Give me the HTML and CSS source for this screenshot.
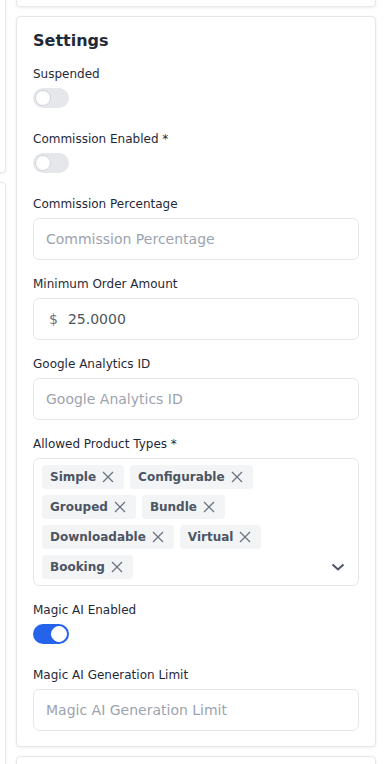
FILE: index.html
```html
<!DOCTYPE html>
<html lang="en">

<head>
  <meta charset="UTF-8">
  <meta name="viewport" content="width=device-width, initial-scale=1.0">
  <title>Vendor Settings</title>
  <link rel="stylesheet" href="styles.css">
</head>

<body>
  <div class="page">
    <div class="side-column">
      <div class="card side-card-top"></div>
      <div class="card side-card-bottom"></div>
    </div>

    <div class="main-column">
      <div class="card top-card"></div>

      <div class="card settings-card">
        <p class="card-title">Settings</p>

        <div class="field toggle-field">
          <label class="field-label">Suspended</label>
          <span class="toggle"><span class="toggle-knob"></span></span>
        </div>

        <div class="field toggle-field">
          <label class="field-label">Commission Enabled *</label>
          <span class="toggle"><span class="toggle-knob"></span></span>
        </div>

        <div class="field">
          <label class="field-label">Commission Percentage</label>
          <input type="text" class="text-input" placeholder="Commission Percentage">
        </div>

        <div class="field">
          <label class="field-label">Minimum Order Amount</label>
          <div class="price-input">
            <span class="price-prefix">$</span>
            <input type="text" class="price-value" value="25.0000">
          </div>
        </div>

        <div class="field">
          <label class="field-label">Google Analytics ID</label>
          <input type="text" class="text-input" placeholder="Google Analytics ID">
        </div>

        <div class="field">
          <label class="field-label">Allowed Product Types *</label>
          <div class="multiselect">
            <div class="tag-list">
              <span class="tag">Simple <svg class="tag-remove" viewBox="0 0 16 16"><path d="M3 3l10 10M13 3L3 13"/></svg></span>
              <span class="tag">Configurable <svg class="tag-remove" viewBox="0 0 16 16"><path d="M3 3l10 10M13 3L3 13"/></svg></span>
              <span class="tag">Grouped <svg class="tag-remove" viewBox="0 0 16 16"><path d="M3 3l10 10M13 3L3 13"/></svg></span>
              <span class="tag">Bundle <svg class="tag-remove" viewBox="0 0 16 16"><path d="M3 3l10 10M13 3L3 13"/></svg></span>
              <span class="tag">Downloadable <svg class="tag-remove" viewBox="0 0 16 16"><path d="M3 3l10 10M13 3L3 13"/></svg></span>
              <span class="tag">Virtual <svg class="tag-remove" viewBox="0 0 16 16"><path d="M3 3l10 10M13 3L3 13"/></svg></span>
              <span class="tag">Booking <svg class="tag-remove" viewBox="0 0 16 16"><path d="M3 3l10 10M13 3L3 13"/></svg></span>
            </div>
            <svg class="select-arrow" viewBox="0 0 16 16"><path d="M2.5 5.5l5.5 5 5.5-5"/></svg>
          </div>
        </div>

        <div class="field toggle-field">
          <label class="field-label">Magic AI Enabled</label>
          <span class="toggle toggle-on"><span class="toggle-knob"></span></span>
        </div>

        <div class="field last-field">
          <label class="field-label">Magic AI Generation Limit</label>
          <input type="text" class="text-input" placeholder="Magic AI Generation Limit">
        </div>
      </div>

      <div class="card next-card"></div>
    </div>
  </div>
</body>

</html>
```

FILE: styles.css
```css
body {
  font-family: 'DejaVu Sans', 'Liberation Sans', sans-serif;
  background-color: #ffffff;
  color: #1f2937;
  margin: 0;
  overflow: hidden;
}

.page {
  display: flex;
  gap: 10px;
  margin-top: -200px;
}

.side-column {
  flex: 0 0 300px;
  margin-left: -294px;
  display: flex;
  flex-direction: column;
  gap: 9px;
}

.main-column {
  flex: 0 0 360px;
  display: flex;
  flex-direction: column;
  gap: 9px;
}

.card {
  box-sizing: border-box;
  background-color: #fff;
  border: 1px solid #e5e7eb;
  border-radius: 4px;
  box-shadow: 0 1px 3px rgba(0, 0, 0, 0.07);
}

.side-card-top {
  height: 373px;
}

.side-card-bottom {
  height: 800px;
}

.top-card {
  height: 207px;
}

.next-card {
  height: 200px;
}

.settings-card {
  padding: 16px 16px 15px;
}

.card-title {
  margin: 0 0 17px;
  font-size: 16px;
  line-height: 16px;
  font-weight: bold;
  color: #1f2937;
}

.field {
  margin-bottom: 16px;
}

.toggle-field {
  margin-bottom: 23px;
}

.last-field {
  margin-bottom: 0;
}

.field-label {
  display: block;
  font-size: 12px;
  line-height: 16px;
  margin-bottom: 6px;
  color: #1f2937;
}

.toggle {
  display: block;
  position: relative;
  box-sizing: border-box;
  width: 36px;
  height: 20px;
  border-radius: 10px;
  background-color: #e5e7eb;
}

.toggle-knob {
  position: absolute;
  top: 2px;
  left: 2px;
  box-sizing: border-box;
  width: 16px;
  height: 16px;
  border-radius: 50%;
  background-color: #fff;
  border: 1px solid #d1d5db;
}

.toggle-on {
  background-color: #2563eb;
}

.toggle-on .toggle-knob {
  left: 18px;
  border-color: #fff;
}

.text-input {
  display: block;
  box-sizing: border-box;
  width: 100%;
  height: 42px;
  padding: 10px 12px;
  border: 1px solid #e5e7eb;
  border-radius: 6px;
  font-family: inherit;
  font-size: 14px;
  line-height: 20px;
  color: #4b5563;
  background-color: #fff;
  outline: none;
}

.text-input::placeholder {
  color: #9ca3af;
}

.price-input {
  display: flex;
  align-items: center;
  box-sizing: border-box;
  height: 42px;
  border: 1px solid #e5e7eb;
  border-radius: 6px;
}

.price-prefix {
  padding-left: 15px;
  font-size: 14px;
  color: #6b7280;
}

.price-value {
  flex: 1;
  min-width: 0;
  border: none;
  outline: none;
  padding: 0 0 0 10px;
  font-family: inherit;
  font-size: 14px;
  color: #4b5563;
  background: transparent;
}

.multiselect {
  display: flex;
  align-items: flex-end;
  box-sizing: border-box;
  padding: 6px 12px 6px 8px;
  border: 1px solid #e5e7eb;
  border-radius: 6px;
}

.tag-list {
  flex: 1;
  display: flex;
  flex-wrap: wrap;
  gap: 6px;
  padding-right: 20px;
}

.tag {
  display: inline-flex;
  align-items: center;
  gap: 4px;
  height: 24px;
  padding: 0 8px;
  border-radius: 4px;
  background-color: #f3f4f6;
  font-size: 12px;
  font-weight: bold;
  color: #4b5563;
}

.tag-remove {
  width: 16px;
  height: 16px;
  fill: none;
  stroke: #6b7280;
  stroke-width: 1.3;
}

.select-arrow {
  width: 16px;
  height: 16px;
  margin-bottom: 4px;
  fill: none;
  stroke: #4b5563;
  stroke-width: 2;
}
```
